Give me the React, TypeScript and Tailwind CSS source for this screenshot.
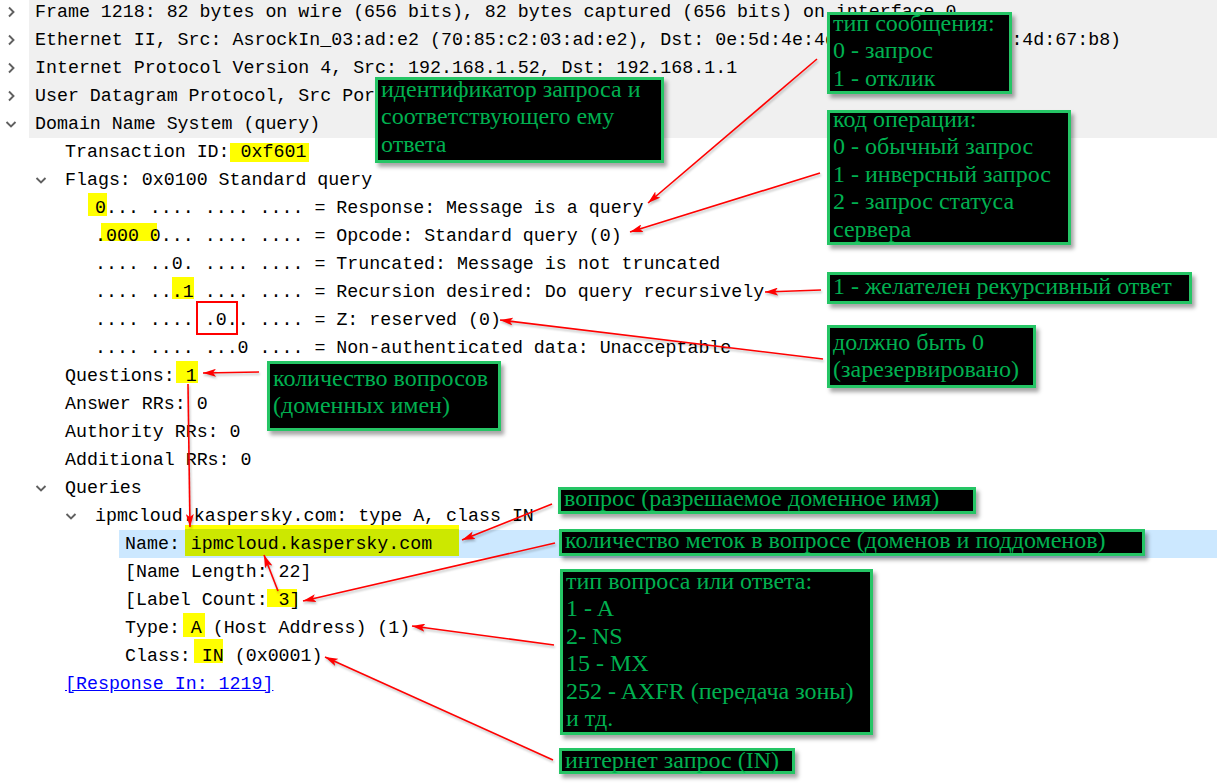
import React from 'react';

const indents = ['w-0', 'w-[30px]', 'w-[60px]', 'w-[90px]'];

function Chevron({ dir }: { dir?: 'r' | 'd' }) {
  if (dir === 'r') {
    return (
      <svg width="12" height="12" viewBox="0 0 12 12" className="ml-[5px]">
        <path d="M4 1.5 L8.5 6 L4 10.5" stroke="#606060" strokeWidth="1.9" fill="none" />
      </svg>
    );
  }
  if (dir === 'd') {
    return (
      <svg width="12" height="12" viewBox="0 0 12 12" className="ml-[5px]">
        <path d="M1.5 4 L6 8.5 L10.5 4" stroke="#606060" strokeWidth="1.9" fill="none" />
      </svg>
    );
  }
  return null;
}

type RowProps = {
  lv: number;
  chev?: 'r' | 'd';
  bg?: string;
  children: React.ReactNode;
};

function Row({ lv, chev, bg = '', children }: RowProps) {
  return (
    <div className="flex h-[28px] leading-[28px] whitespace-pre">
      <div className={`shrink-0 ${indents[lv]}`} />
      <div className="w-[29px] shrink-0 flex items-center">
        <Chevron dir={chev} />
      </div>
      <div className={`relative isolate flex-1 pl-[6px] ${bg}`}>{children}</div>
    </div>
  );
}

// marker pen highlight drawn behind the characters
function Hl({ box, color = 'bg-[#ffff00]', children }: { box: string; color?: string; children: React.ReactNode }) {
  return (
    <span className="relative inline-block h-[28px]">
      <span className={`absolute -z-10 ${box} ${color}`} />
      {children}
    </span>
  );
}

type NoteProps = {
  pos: string;
  off: string;
  lines: string[];
};

function Note({ pos, off, lines }: NoteProps) {
  return (
    <div
      className={`absolute ${pos} border-[3px] border-[#25c565] bg-black shadow-[3px_4px_4px_rgba(0,0,0,0.35)] pl-[3px] font-['Liberation_Serif',serif] text-[24px] leading-[27.4px] text-[#00b050] whitespace-nowrap`}
    >
      <div className={off}>
        {lines.map((l, i) => (
          <div key={i}>{l}</div>
        ))}
      </div>
    </div>
  );
}

const arrows: [number, number, number, number][] = [
  [817, 59, 648, 203],
  [820, 173, 630, 232],
  [821, 290, 765, 292],
  [823, 359, 500, 320],
  [259, 372, 203, 373],
  [188, 384, 190, 527],
  [552, 504, 462, 540],
  [555, 543, 303, 601],
  [278, 591, 264, 555],
  [554, 645, 412, 626],
  [553, 760, 325, 657],
];

export default function App() {
  return (
    <div className="relative w-[1217px] h-[783px] overflow-hidden bg-white text-black">
      {/* Packet details tree */}
      <div className="-mt-[2px] font-['Liberation_Mono',monospace] text-[18.3px]">
        <Row lv={0} chev="r" bg="bg-[#f0f0f0]">
          Frame 1218: 82 bytes on wire (656 bits), 82 bytes captured (656 bits) on interface 0
        </Row>
        <Row lv={0} chev="r" bg="bg-[#f0f0f0]">
          Ethernet II, Src: AsrockIn_03:ad:e2 (70:85:c2:03:ad:e2), Dst: 0e:5d:4e:4d:67:b8 (0e:5d:4e:4d:67:b8)
        </Row>
        <Row lv={0} chev="r" bg="bg-[#f0f0f0]">
          Internet Protocol Version 4, Src: 192.168.1.52, Dst: 192.168.1.1
        </Row>
        <Row lv={0} chev="r" bg="bg-[#f0f0f0]">
          User Datagram Protocol, Src Port: 61478, Dst Port: 53
        </Row>
        <Row lv={0} chev="d" bg="bg-[#f0f0f0]">
          Domain Name System (query)
        </Row>
        <Row lv={1}>
          Transaction ID:<Hl box="left-0 right-[-3px] top-[5px] bottom-[4px]"> 0xf601</Hl>
        </Row>
        <Row lv={1} chev="d">
          Flags: 0x0100 Standard query
        </Row>
        <Row lv={2}>
          <Hl box="left-[-7px] right-[-1px] top-[-1px] bottom-[6px]">0</Hl>... .... .... .... = Response: Message is a query
        </Row>
        <Row lv={2}>
          .<Hl box="left-[-5px] right-[4px] top-[1px] bottom-[9px]">000 0</Hl>... .... .... = Opcode: Standard query (0)
        </Row>
        <Row lv={2}>.... ..0. .... .... = Truncated: Message is not truncated</Row>
        <Row lv={2}>
          .... ..<Hl box="left-0 right-0 top-[-1px] bottom-[7px]">.1</Hl> .... .... = Recursion desired: Do query recursively
        </Row>
        <Row lv={2}>
          .... ....{' '}
          <span className="relative inline-block h-[28px]">
            <span className="absolute z-10 left-[-9px] right-0 top-[-5px] bottom-[-1px] border-2 border-[#ff0000]" />
            .0.
          </span>
          . .... = Z: reserved (0)
        </Row>
        <Row lv={2}>.... .... ...0 .... = Non-authenticated data: Unacceptable</Row>
        <Row lv={1}>
          Questions:<Hl box="left-[1px] right-[-1px] top-[-1px] bottom-[7px]"> 1</Hl>
        </Row>
        <Row lv={1}>Answer RRs: 0</Row>
        <Row lv={1}>Authority RRs: 0</Row>
        <Row lv={1}>Additional RRs: 0</Row>
        <Row lv={1} chev="d">
          Queries
        </Row>
        <Row lv={2} chev="d">
          ipmcloud.kaspersky.com: type A, class IN
        </Row>
        <Row lv={3} bg="bg-[#cce8ff]">
          Name:
          <Hl
            box="left-[5px] right-[-27px] top-[-5px] bottom-[2px] border-t-4 border-[#ffff00]"
            color="bg-[#cce800]"
          >
            {' '}ipmcloud.kaspersky.com
          </Hl>
        </Row>
        <Row lv={3}>[Name Length: 22]</Row>
        <Row lv={3}>
          [Label Count:<Hl box="left-[-1px] right-[-7px] top-[3px] bottom-[7px]"> 3</Hl>]
        </Row>
        <Row lv={3}>
          Type:<Hl box="left-[3px] right-[-3px] top-[-1px] bottom-[5px]"> A</Hl> (Host Address) (1)
        </Row>
        <Row lv={3}>
          Class:<Hl box="left-[3px] right-[1px] top-[-3px] bottom-[7px]"> IN</Hl> (0x0001)
        </Row>
        <Row lv={1}>
          <span className="text-[#0000ff] underline">[Response In: 1219]</span>
        </Row>
      </div>

      {/* Callout arrows */}
      <svg
        className="absolute inset-0 pointer-events-none drop-shadow-[1px_2px_1px_rgba(0,0,0,0.25)]"
        width="1217"
        height="783"
      >
        <defs>
          <marker
            id="ah"
            viewBox="0 0 13 8"
            refX="13"
            refY="4"
            markerWidth="13"
            markerHeight="8"
            markerUnits="userSpaceOnUse"
            orient="auto"
          >
            <path d="M0 0 L13 4 L0 8 L3 4 Z" fill="#ff0000" />
          </marker>
        </defs>
        {arrows.map(([x1, y1, x2, y2], i) => (
          <line key={i} x1={x1} y1={y1} x2={x2} y2={y2} stroke="#ff0000" strokeWidth="1.6" markerEnd="url(#ah)" />
        ))}
      </svg>

      {/* Annotations */}
      <Note
        pos="left-[827px] top-[12px] w-[185px] h-[82px]"
        off="-mt-[5px]"
        lines={['тип сообщения:', '0 - запрос', '1 - отклик']}
      />
      <Note
        pos="left-[375px] top-[77px] w-[289px] h-[86px]"
        off="-mt-[4px]"
        lines={['идентификатор запроса и', 'соответствующего ему', 'ответа']}
      />
      <Note
        pos="left-[827px] top-[110px] w-[244px] h-[135px]"
        off="-mt-[7px]"
        lines={['код операции:', '0 - обычный запрос', '1 - инверсный запрос', '2 - запрос статуса', 'сервера']}
      />
      <Note
        pos="left-[827px] top-[272px] w-[365px] h-[32px]"
        off="-mt-[2px]"
        lines={['1 - желателен рекурсивный ответ']}
      />
      <Note
        pos="left-[827px] top-[325px] w-[209px] h-[63px]"
        off="mt-[1px]"
        lines={['должно быть 0', '(зарезервировано)']}
      />
      <Note
        pos="left-[267px] top-[361px] w-[234px] h-[70px]"
        off="mt-[1px]"
        lines={['количество вопросов', '(доменных имен)']}
      />
      <Note
        pos="left-[558px] top-[487px] w-[418px] h-[27px]"
        off="-mt-[5px]"
        lines={['вопрос (разрешаемое доменное имя)']}
      />
      <Note
        pos="left-[559px] top-[529px] w-[586px] h-[27px]"
        off="-mt-[5px]"
        lines={['количество меток в вопросе (доменов и поддоменов)']}
      />
      <Note
        pos="left-[560px] top-[569px] w-[313px] h-[166px]"
        off="-mt-[4px]"
        lines={['тип вопроса или ответа:', '1 - A', '2- NS', '15 - MX', '252 - AXFR (передача зоны)', 'и тд.']}
      />
      <Note
        pos="left-[559px] top-[748px] w-[236px] h-[26px]"
        off="-mt-[4px]"
        lines={['интернет запрос (IN)']}
      />
    </div>
  );
}
